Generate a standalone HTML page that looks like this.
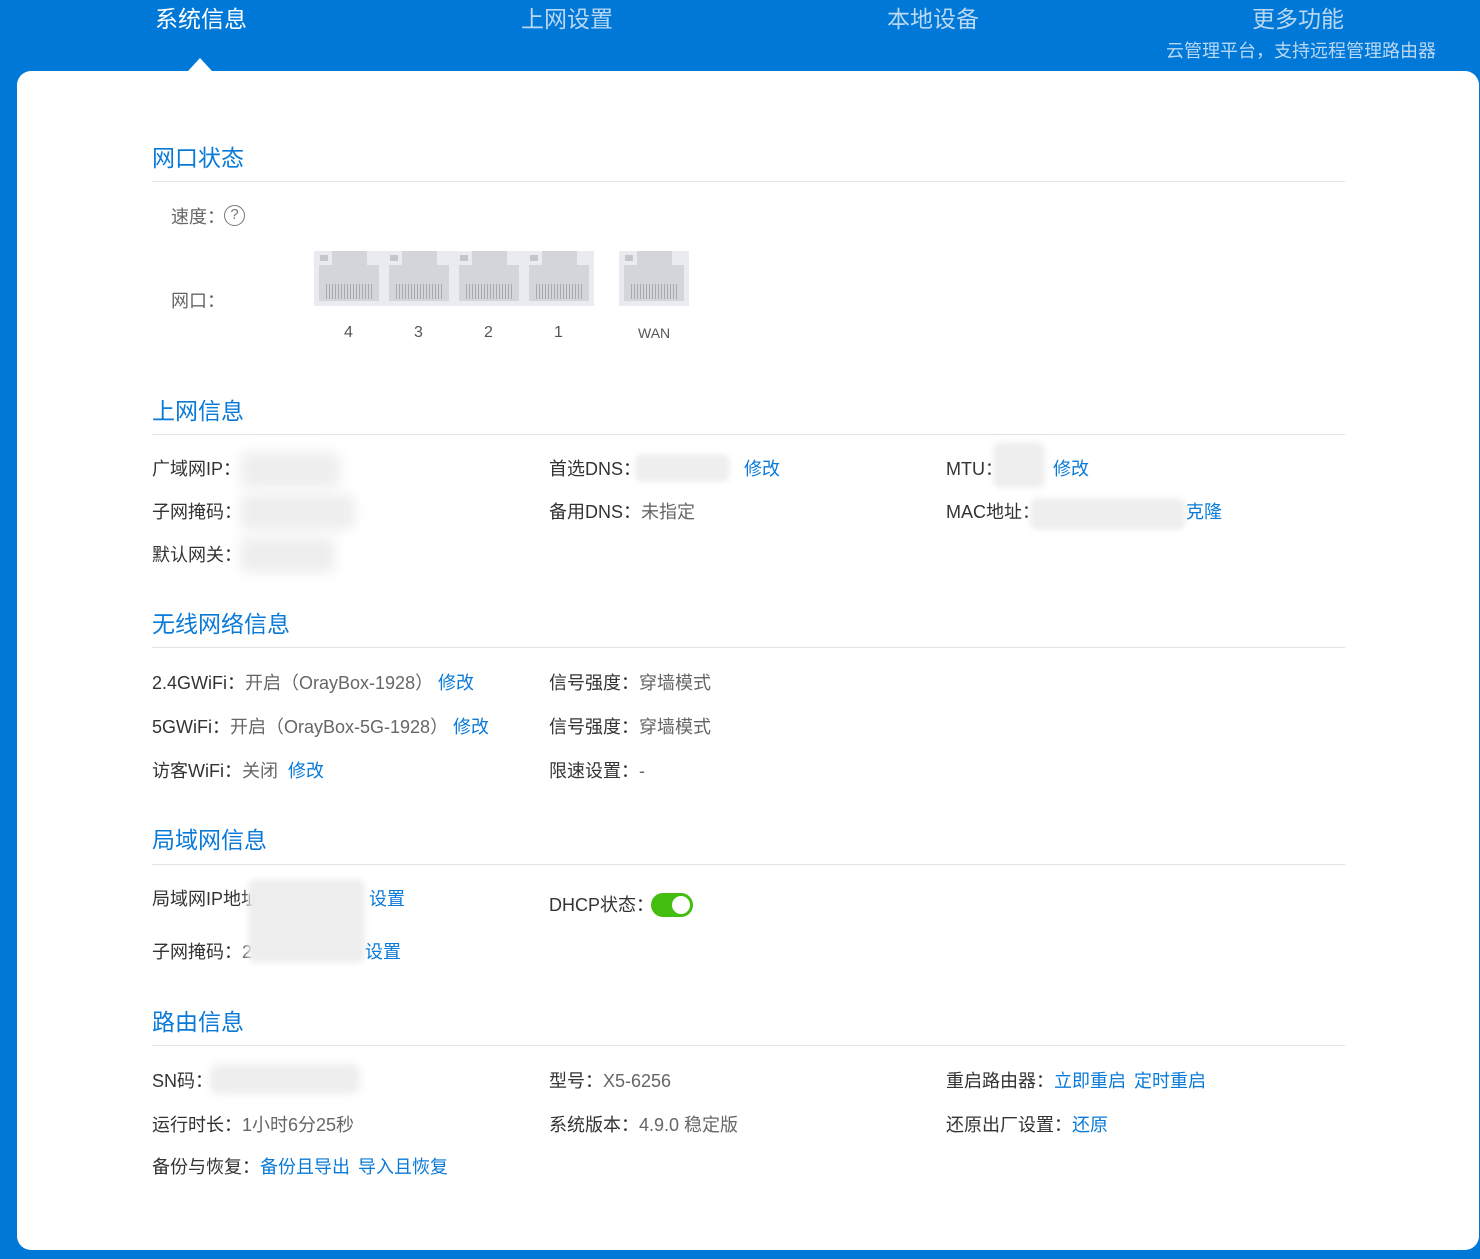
<!DOCTYPE html>
<html><head><meta charset="utf-8"><style>
*{margin:0;padding:0;box-sizing:border-box}
body{width:1480px;height:1259px;background:#0078d7;position:relative;overflow:hidden;font-family:"Liberation Sans","Noto Sans CJK SC",sans-serif;}
.a{position:absolute;white-space:nowrap}
.nav{font-size:23px;color:#b9d8f3;top:0px}
.card{position:absolute;left:17px;top:71px;width:1462px;height:1179px;background:#fff;border-radius:14px}
.h{position:absolute;left:152px;font-size:23px;color:#0a7ad8}
.ln{position:absolute;left:152px;width:1193px;height:1px;background:#e2e2e2}
.t{position:absolute;font-size:18px;color:#333;white-space:nowrap}
.v{color:#666}
.k{color:#0a7ad8}
.bl{position:absolute;background:#eee;filter:blur(6px);border-radius:8px}
.port{position:absolute;top:251px;width:70px;height:55px;background:#e9ebf0}
.port .in{position:absolute;left:5px;top:14px;width:60px;height:36px;background:#d3d5da}
.port .tp{position:absolute;left:18px;top:0;width:35px;height:16px;background:#d3d5da}
.port .sq{position:absolute;left:6px;top:4px;width:8px;height:6px;background:#c4c6cb}
.port .pins{position:absolute;left:12px;top:33px;width:46px;height:15px;background:repeating-linear-gradient(90deg,#a8aab0 0 1px,transparent 1px 3px)}
.num{position:absolute;top:323px;font-size:16px;color:#555}
</style></head><body>
<div class="a nav" style="left:155px;color:#fff">系统信息</div>
<div class="a nav" style="left:521px">上网设置</div>
<div class="a nav" style="left:887px">本地设备</div>
<div class="a nav" style="left:1252px">更多功能</div>
<div class="a" style="left:1166px;top:37px;font-size:18px;color:#b9d8f3">云管理平台，支持远程管理路由器</div>
<div class="a" style="left:188px;top:58px;width:0;height:0;border-left:12px solid transparent;border-right:12px solid transparent;border-bottom:13px solid #fff"></div>
<div class="card"></div>

<div class="h" style="top:139px">网口状态</div><div class="ln" style="top:181px"></div>
<div class="t v" style="left:171px;top:203px">速度：</div>
<div class="a" style="left:224px;top:205px;width:21px;height:21px;border:1.5px solid #777;border-radius:50%;font-size:15px;color:#777;text-align:center;line-height:18px">?</div>
<div class="t v" style="left:171px;top:287px">网口：</div>
<div class="port" style="left:314px"><div class="in"></div><div class="tp"></div><div class="sq"></div><div class="pins"></div></div>
<div class="port" style="left:384px"><div class="in"></div><div class="tp"></div><div class="sq"></div><div class="pins"></div></div>
<div class="port" style="left:454px"><div class="in"></div><div class="tp"></div><div class="sq"></div><div class="pins"></div></div>
<div class="port" style="left:524px"><div class="in"></div><div class="tp"></div><div class="sq"></div><div class="pins"></div></div>
<div class="port" style="left:619px"><div class="in"></div><div class="tp"></div><div class="sq"></div><div class="pins"></div></div>
<div class="num" style="left:344px;top:324px">4</div><div class="num" style="left:414px;top:324px">3</div><div class="num" style="left:484px;top:324px">2</div><div class="num" style="left:554px;top:324px">1</div>
<div class="num" style="left:638px;font-size:14px;top:325px">WAN</div>

<div class="h" style="top:392px">上网信息</div><div class="ln" style="top:434px"></div>
<div class="t" style="left:152px;top:455px">广域网IP：</div><div class="bl" style="left:240px;top:452px;width:100px;height:36px"></div>
<div class="t" style="left:152px;top:498px">子网掩码：</div><div class="bl" style="left:240px;top:494px;width:115px;height:36px"></div>
<div class="t" style="left:152px;top:541px">默认网关：</div><div class="bl" style="left:240px;top:537px;width:95px;height:36px"></div>
<div class="t" style="left:549px;top:455px">首选DNS：</div><div class="bl" style="left:635px;top:454px;width:95px;height:28px;filter:blur(3px)"></div><div class="t k" style="left:744px;top:455px">修改</div>
<div class="t" style="left:549px;top:498px">备用DNS：<span class="v">未指定</span></div>
<div class="t" style="left:946px;top:455px">MTU：</div><div class="bl" style="left:993px;top:442px;width:52px;height:46px;filter:blur(3px)"></div><div class="t k" style="left:1053px;top:455px">修改</div>
<div class="t" style="left:946px;top:498px">MAC地址：</div><div class="bl" style="left:1030px;top:498px;width:155px;height:32px;filter:blur(3px)"></div><div class="t k" style="left:1186px;top:498px">克隆</div>

<div class="h" style="top:605px">无线网络信息</div><div class="ln" style="top:647px"></div>
<div class="t" style="left:152px;top:669px">2.4GWiFi：<span class="v">开启（OrayBox-1928）</span></div><div class="t k" style="left:438px;top:669px">修改</div>
<div class="t" style="left:152px;top:713px">5GWiFi：<span class="v">开启（OrayBox-5G-1928）</span></div><div class="t k" style="left:453px;top:713px">修改</div>
<div class="t" style="left:152px;top:757px">访客WiFi：<span class="v">关闭</span></div><div class="t k" style="left:288px;top:757px">修改</div>
<div class="t" style="left:549px;top:669px">信号强度：<span class="v">穿墙模式</span></div>
<div class="t" style="left:549px;top:713px">信号强度：<span class="v">穿墙模式</span></div>
<div class="t" style="left:549px;top:757px">限速设置：<span class="v">-</span></div>

<div class="h" style="top:821px">局域网信息</div><div class="ln" style="top:864px"></div>
<div class="t" style="left:152px;top:885px">局域网IP地址</div>
<div class="t" style="left:152px;top:938px">子网掩码：<span class="v">2</span></div>
<div class="bl" style="left:248px;top:879px;width:117px;height:84px;filter:blur(3px)"></div>
<div class="t k" style="left:369px;top:885px">设置</div><div class="t k" style="left:365px;top:938px">设置</div>
<div class="t" style="left:549px;top:891px">DHCP状态：</div>
<div class="a" style="left:651px;top:893px;width:42px;height:24px;border-radius:12px;background:#44bd11"><div style="position:absolute;right:3px;top:3px;width:18px;height:18px;border-radius:50%;background:#fff"></div></div>

<div class="h" style="top:1003px">路由信息</div><div class="ln" style="top:1045px"></div>
<div class="t" style="left:152px;top:1067px">SN码：</div><div class="bl" style="left:210px;top:1064px;width:150px;height:30px;filter:blur(4px)"></div>
<div class="t" style="left:152px;top:1111px">运行时长：<span class="v">1小时6分25秒</span></div>
<div class="t" style="left:152px;top:1153px">备份与恢复：<span class="k">备份且导出</span></div><div class="t k" style="left:358px;top:1153px">导入且恢复</div>
<div class="t" style="left:549px;top:1067px">型号：<span class="v">X5-6256</span></div>
<div class="t" style="left:549px;top:1111px">系统版本：<span class="v">4.9.0 稳定版</span></div>
<div class="t" style="left:946px;top:1067px">重启路由器：<span class="k">立即重启</span></div><div class="t k" style="left:1134px;top:1067px">定时重启</div>
<div class="t" style="left:946px;top:1111px">还原出厂设置：<span class="k">还原</span></div>
</body></html>
